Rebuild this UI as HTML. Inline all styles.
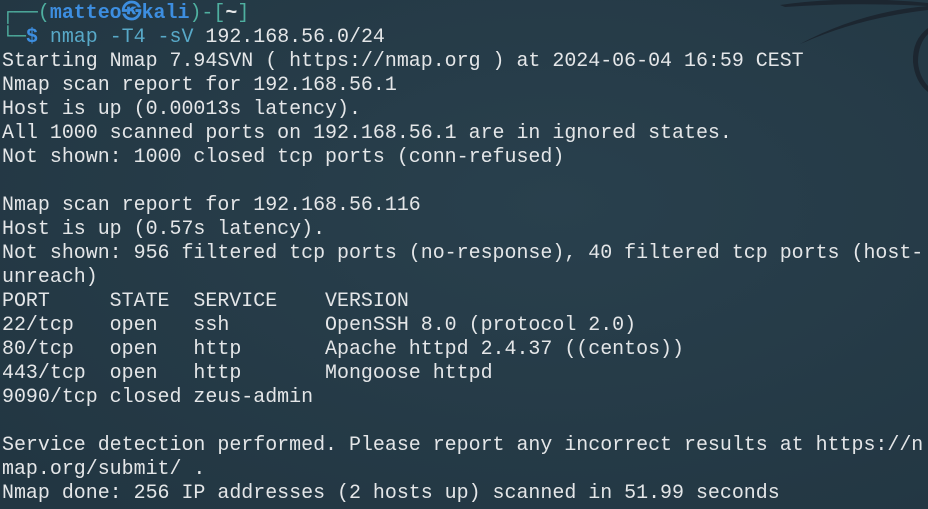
<!DOCTYPE html>
<html><head><meta charset="utf-8"><style>
html,body{margin:0;padding:0;width:928px;height:509px;overflow:hidden;background:#253a47;}
#bg{position:absolute;left:0;top:0}
pre{position:absolute;left:2px;top:1px;margin:0;font-family:"Liberation Mono","DejaVu Sans Mono",monospace;font-size:19.95px;line-height:24px;color:#e4e6e8;white-space:pre;}
.g{color:#4fb0a0}.b{color:#3d8ee0;font-weight:bold}.c{color:#58a9c8}.w{color:#e4e6e8}
</style></head><body>
<svg id="bg" width="928" height="509">
<defs><radialGradient id="r" cx="0.6" cy="0.4" r="0.8"><stop offset="0" stop-color="#29404d"/><stop offset="1" stop-color="#223642"/></radialGradient></defs>
<rect width="928" height="509" fill="url(#r)"/>
<path d="M780 5 Q850 -5 928 3 L928 6 Q850 2 785 7Z" fill="#1c2630"/>
<path d="M800 44 Q860 12 928 6 L928 10 Q860 18 805 42Z" fill="#1c2630"/>
<path d="M928 28 Q912 40 913 62 Q915 82 928 92 L928 86 Q919 76 918 62 Q918 44 928 34Z" fill="#1c2630"/>
</svg>
<pre><span class="g">┌──(</span><span class="b">matteo㉿kali</span><span class="g">)-[</span><span class="w" style="font-weight:bold">~</span><span class="g">]</span>
<span class="g">└─</span><span class="b">$</span> <span class="c">nmap -T4 -sV</span> 192.168.56.0/24
Starting Nmap 7.94SVN ( https://nmap.org ) at 2024-06-04 16:59 CEST
Nmap scan report for 192.168.56.1
Host is up (0.00013s latency).
All 1000 scanned ports on 192.168.56.1 are in ignored states.
Not shown: 1000 closed tcp ports (conn-refused)

Nmap scan report for 192.168.56.116
Host is up (0.57s latency).
Not shown: 956 filtered tcp ports (no-response), 40 filtered tcp ports (host-
unreach)
PORT     STATE  SERVICE    VERSION
22/tcp   open   ssh        OpenSSH 8.0 (protocol 2.0)
80/tcp   open   http       Apache httpd 2.4.37 ((centos))
443/tcp  open   http       Mongoose httpd
9090/tcp closed zeus-admin

Service detection performed. Please report any incorrect results at https://n
map.org/submit/ .
Nmap done: 256 IP addresses (2 hosts up) scanned in 51.99 seconds</pre>
</body></html>
